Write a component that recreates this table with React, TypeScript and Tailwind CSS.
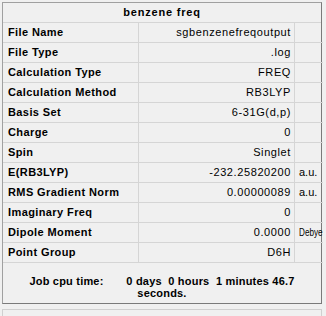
import React from 'react';

const rows: [string, string, string][] = [
  ['File Name', 'sgbenzenefreqoutput', ''],
  ['File Type', '.log', ''],
  ['Calculation Type', 'FREQ', ''],
  ['Calculation Method', 'RB3LYP', ''],
  ['Basis Set', '6-31G(d,p)', ''],
  ['Charge', '0', ''],
  ['Spin', 'Singlet', ''],
  ['E(RB3LYP)', '-232.25820200', 'a.u.'],
  ['RMS Gradient Norm', '0.00000089', 'a.u.'],
  ['Imaginary Freq', '0', ''],
  ['Dipole Moment', '0.0000', 'Debye'],
  ['Point Group', 'D6H', ''],
];

const App: React.FC = () => {
  return (
    <div
      className="w-[326px] h-[316px] bg-[#f0f0f0] pt-[2px] px-[2px] text-[11px] text-black overflow-hidden"
      style={{ fontFamily: '"Liberation Sans", Arial, sans-serif' }}
    >
      <div className="w-[320px] border border-[#a0a0a0] border-r-[#7a7a7a] border-b-[#7a7a7a] bg-[#f0f0f0]">
        <div className="h-[20px] flex items-center justify-center font-bold tracking-[0.8px] border-b border-[#d5d5d5]">
          benzene freq
        </div>
        <div className="grid grid-cols-[136px_156px_1fr]">
          {rows.map(([label, value, unit]) => (
            <React.Fragment key={label}>
              <div className="h-[20px] flex items-center pl-[5px] font-bold tracking-[0.4px] border-b border-r border-[#d5d5d5] whitespace-nowrap">
                {label}
              </div>
              <div className="h-[20px] flex items-center justify-end pr-[3px] tracking-[0.6px] border-b border-r border-[#d5d5d5] whitespace-nowrap">
                {value}
              </div>
              <div className="h-[20px] flex items-center pl-[4px] border-b border-[#d5d5d5] whitespace-nowrap">
                <span className={unit.length > 4 ? 'inline-block origin-left scale-x-[0.74] -mr-[8px]' : 'inline-block'}>
                  {unit}
                </span>
              </div>
            </React.Fragment>
          ))}
        </div>
        <div className="h-[40px] flex flex-col items-center justify-center font-bold leading-[12px] pt-[7px] tracking-[0.2px]">
          <div className="whitespace-pre">{'Job cpu time:       0 days  0 hours  1 minutes 46.7'}</div>
          <div>seconds.</div>
        </div>
      </div>
      <div className="mt-[5px] w-[320px] h-[10px] border-t border-l border-r border-[#d0d0d0]" />
    </div>
  );
};

export default App;
